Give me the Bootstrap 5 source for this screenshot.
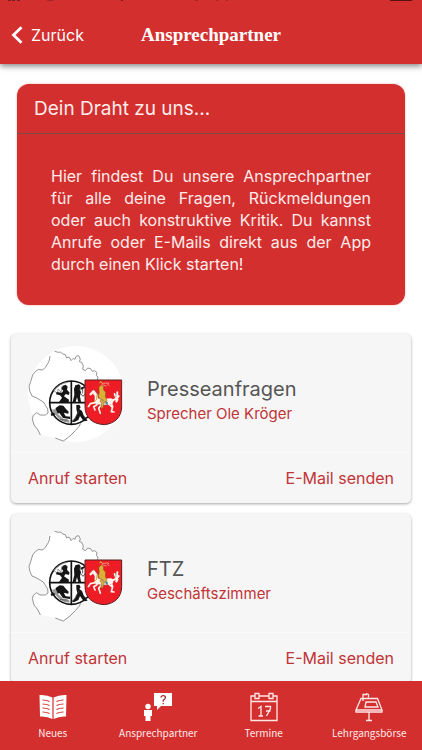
<!DOCTYPE html>
<html lang="de">
<head>
<meta charset="utf-8">
<meta name="viewport" content="width=device-width, initial-scale=1">
<title>Ansprechpartner</title>
<link href="https://cdn.jsdelivr.net/npm/bootstrap@5.3.0/dist/css/bootstrap.min.css" rel="stylesheet">
<style>
:root { --brand: #d32f2f; --link: #c13436; }
body { font-family: Inter, Roboto, sans-serif; font-size: 16px; line-height: 22px; }
a { text-decoration: none; }
.bg-brand { background: var(--brand); }
.app-header { box-shadow: 0 2px 6px rgba(0,0,0,.5); z-index: 2; padding-bottom: 16px; }
.status-strip { height: 2px; display: block; width: 100%; }
.app-bar { display: grid; grid-template-columns: 1fr auto 1fr; padding: 20px 11px 0; }
.app-title { font: bold 19px/26px "Liberation Serif", serif; }
.app-scroll { scrollbar-width: none; padding: 20px 11px 0; }
.app-scroll::-webkit-scrollbar { display: none; }
.intro { background: var(--brand); border: 0; border-radius: 12px; margin: 0 6px 29px; box-shadow: 0 0 2px rgba(211,47,47,.5); color: #ffecea; }
.intro-head { padding: 12px 17px; font-size: 19px; line-height: 25px; border-bottom: 1px solid #7a4a4a; }
.intro-text { padding: 31px 34px 30px; text-align: justify; }
.contact { background: #f6f6f6; border: 0; border-radius: 5px; margin-bottom: 11px; box-shadow: 0 1px 3px rgba(0,0,0,.35); }
.contact-main { padding: 12px 17px 10px; gap: 23px; }
.contact-label { padding-top: 12px; }
.contact-name { font-size: 20px; line-height: 28px; color: #555; }
.contact-role { font-size: 15px; line-height: 22px; color: var(--link); }
.contact-actions { padding: 14px 17px; border-top: 1px solid #fafafa; }
.contact-actions a { color: var(--link); }
.crest { width: 96px; height: 96px; }
.tabs { min-height: 69px; z-index: 2; grid-template-columns: repeat(4, 1fr); }
.tabs a { color: #ffe9e7; font: 10px/18px "Noto Sans CJK SC", sans-serif; padding-top: 11px; gap: 2px; }
.tabs svg { width: 30px; height: 30px; }
</style>
<script src="https://cdn.jsdelivr.net/npm/bootstrap@5.3.0/dist/js/bootstrap.bundle.min.js"></script>
</head>
<body class="d-flex flex-column vh-100 bg-white overflow-hidden">

<svg class="d-none" aria-hidden="true">
  <symbol id="emblem" viewBox="24 18 288 288">
    <path d="M90 45L104 34 115 37 122 36 128 42 136 44 140 54 150 54 153 62 160 55 165 58 168 49 176 47 181 57 178 65 185 67 190 78 188 88 196 92 203 84 212 86 217 94 224 92 231 98 229 107 234 111 231 140 200 240 180 252 166 272 150 288 130 303 116 298 106 294 61 285 54 270 42 255 37 236 40 226 50 218 60 225 76 225 84 219 83 207 77 197 70 186 60 180 48 173 36 168 30 155 27 140 32 125 38 105 46 95 56 88 68 90 76 82 85 68 88 60Z" fill="#fff"/>
    <path d="M104 34L115 37 122 36 128 42 136 44 140 54 144 51 150 54 153 62 160 55 165 58 168 49 176 47 181 57 178 65 185 67 190 78 188 88 196 92 203 84 212 86 217 94 224 92 231 98 229 107 234 111 232 122M182 250L178 258 166 272 150 288 130 303 116 298 106 294M61 285L54 270 42 255 37 236 40 226 50 218 60 225 76 225 84 219 83 207 77 197 70 186 60 180 48 173 36 168 30 155 27 140 32 125 38 105 46 95 56 88 68 90 76 82 85 68 88 60 90 48" fill="none" stroke="#808080" stroke-width="2.500" stroke-linejoin="round"/>
    <circle cx="154" cy="188" r="65" fill="#fff" stroke="#111" stroke-width="5"/>
    <path d="M101 151q18-21 42-24M101 151l12 10 1-14 9 10 2-17 8 6" fill="none" stroke="#888" stroke-width="2.500"/>
    <path d="M154 123V253M89 188H219" stroke="#111" stroke-width="5"/>
    <g fill="#151515">
      <path d="M128 137l9-3 6 6-2 9 8 9-3 7-9-3-5 7 15 10-1 7H117l9-13-6-7-12-3 2-7 15 2 5-6-5-5z"/>
      <path d="M166 136l11-3 5 6-3 9 4 8-3 13 3 17h-8l-4-14-4 14h-9l5-21-1-19zM181 143l14-5v5l-13 7z"/>
      <path d="M107 204l12-8 11 1 8 10 8 8-1 6-14-3 6 11 14 1-1 7-21-3-11-15-14 5-10 4-2-7 14-6z"/>
      <path d="M169 195l9-1 4 8-4 5 8 6 6 16 11 13-12 2-11-16-5 12-13 7-7-3 11-10 6-15-3-12z"/>
    </g>
    <path d="M95 209l10 14 9 11 18 12 16 2v-8l-17-2-17-16-7-15z" fill="#9b9b9b"/>
    <path d="M119 239l24 1M160 244l17-32M190 227l10 9M182 160l7 9 8-10M188 147v13" fill="none" stroke="#444" stroke-width="2.500"/>
    <path d="M195 120H305V199C305 232 284 251 253 254C216 252 195 232 195 199Z" fill="#ee1c25" stroke="#5c2020" stroke-width="3"/>
    <g fill="none" stroke="#fff3ea" stroke-linecap="round" stroke-linejoin="round">
      <path d="M222 157l7 10 0 14" stroke-width="10"/>
      <path d="M212 163l9-10" stroke-width="7"/>
      <path d="M233 184l18 2 20-2" stroke-width="18"/>
      <path d="M226 188l-15 3-6 9M231 194l-10 6 4 10" stroke-width="5"/>
      <path d="M245 193l-9 12 5 15M273 188l5 12-4 15 8 1M266 192l10 9" stroke-width="5"/>
      <path d="M278 181l12-6 2-18M290 177l6-9M287 170l-3-8" stroke-width="6"/>
      <path d="M289 184l3-5" stroke-width="7"/>
    </g>
    <path d="M217 150l7 1 7 9 4 15M232 197l12-2 18 1M287 158l1 13M241 221l6 1M208 202l-4 1" fill="none" stroke="#6c6270" stroke-width="1.500"/>
    <g fill="#ddb136" stroke="#805620" stroke-width="1.500">
      <path d="M237 141l7-6 7 5-1 9 7 8-1 12 5 13-5 7-8-10-10-3-3-9 3-10-1-8z"/>
      <path d="M245 178l8 11-5 15-5 1 2-14-5-9z"/>
    </g>
    <path d="M239 130l3-6 5 7M231 165l-2 15M228 181l-6 4M239 164l12 3" fill="none" stroke="#d6ae38" stroke-width="3"/>
    <path d="M246 130l20-1-3 5 5 3M245 134l15 4" fill="none" stroke="#f0c5a5" stroke-width="2"/>
    <path d="M256 183l7 3 1 9-7-3z" fill="#4f8296"/>
  </symbol>
</svg>

<header class="app-header bg-brand text-white position-relative flex-shrink-0">
  <svg class="status-strip" viewBox="0 0 422 2" preserveAspectRatio="none" aria-hidden="true">
    <path d="M8 0h3v1h-3zM12 0h3v1h-3zM17 0h3v1h-3zM121 0h2v1h-2z" fill="#74201f"/>
    <path d="M47 0h7v1h-7zM195 0h3v1h-3zM216 0h2v1h-2zM226 0h2v1h-2z" fill="#a82626"/>
    <path d="M389 0h24l-2 1h-20z" fill="#5a1010"/>
  </svg>
  <div class="app-bar align-items-center">
    <a href="#" class="d-flex align-items-center gap-2 text-white">
      <svg width="12" height="18" viewBox="0 0 12 18" aria-hidden="true"><path d="M10.500 1.200L2.500 9l8 7.800" fill="none" stroke="#fff" stroke-width="2.800"/></svg>
      <span>Zurück</span>
    </a>
    <h1 class="app-title mb-0">Ansprechpartner</h1>
  </div>
</header>

<main class="app-scroll flex-grow-1 overflow-auto">
  <section class="card intro">
    <h2 class="intro-head fw-normal mb-0">Dein Draht zu uns...</h2>
    <p class="intro-text mb-0">Hier findest Du unsere Ansprechpartner für alle deine Fragen, Rückmeldungen oder auch konstruktive Kritik. Du kannst Anrufe oder E-Mails direkt aus der App durch einen Klick starten!</p>
  </section>

  <article class="card contact">
    <div class="contact-main d-flex align-items-center">
      <svg class="crest bg-white rounded-circle overflow-visible flex-shrink-0" aria-hidden="true"><use href="#emblem"/></svg>
      <div class="contact-label">
        <h3 class="contact-name fw-normal mb-0">Presseanfragen</h3>
        <p class="contact-role mb-0">Sprecher Ole Kröger</p>
      </div>
    </div>
    <div class="contact-actions d-flex justify-content-between">
      <a href="#">Anruf starten</a><a href="#">E-Mail senden</a>
    </div>
  </article>

  <article class="card contact">
    <div class="contact-main d-flex align-items-center">
      <svg class="crest flex-shrink-0" aria-hidden="true"><use href="#emblem"/></svg>
      <div class="contact-label">
        <h3 class="contact-name fw-normal mb-0">FTZ</h3>
        <p class="contact-role mb-0">Geschäftszimmer</p>
      </div>
    </div>
    <div class="contact-actions d-flex justify-content-between">
      <a href="#">Anruf starten</a><a href="#">E-Mail senden</a>
    </div>
  </article>
</main>

<nav class="tabs d-grid bg-brand position-relative flex-shrink-0">
  <a href="#" class="d-flex flex-column align-items-center">
    <svg viewBox="0 0 30 30" aria-hidden="true"><path d="M1.500 3Q9 2.500 14.400 5.500V27Q9 24 2 24.500zM28.500 3Q21 2.500 15.600 5.500V27Q21 24 28 24.500z" fill="#fff"/><path d="M4.500 8q4 0 7 1.500M4.500 12q4 0 7 1.500M4.500 16q4 0 7 1.500M4.500 20q4 0 7 1.500M25.500 8q-4 0-7 1.500M25.500 12q-4 0-7 1.500M25.500 16q-4 0-7 1.500M25.500 20q-4 0-7 1.500" fill="none" stroke="#d32f2f" stroke-width="1.200"/></svg>
    <span>Neues</span>
  </a>
  <a href="#" class="d-flex flex-column align-items-center">
    <svg viewBox="0 0 30 30" aria-hidden="true"><path d="M11 1h18v13H18l-4 4v-4h-3z" fill="#fff"/><path d="M18 5.500q0-1.800 2.200-1.800t2.200 2q0 1.200-2.200 2.600v1.500M20.200 11v1.300" fill="none" stroke="#a52a2a" stroke-width="1.300"/><circle cx="5" cy="14.500" r="2.700" fill="#fff"/><path d="M1 18h8v6H7.500v5h-5v-5H1z" fill="#fff"/></svg>
    <span>Ansprechpartner</span>
  </a>
  <a href="#" class="d-flex flex-column align-items-center">
    <svg viewBox="0 0 30 30" fill="none" stroke="#ffe9e7" stroke-width="1.300" aria-hidden="true"><path d="M6 4H2v24.500h26V4h-4M10 4h10M2 9.500h26M6 1.500h4v5H6zM20 1.500h4v5h-4zM9 16.500l3-2V24M9.500 24H14M16 14.500h5.500v2L17.500 24M17 19h4.500"/></svg>
    <span>Termine</span>
  </a>
  <a href="#" class="d-flex flex-column align-items-center">
    <svg viewBox="0 0 30 30" fill="none" stroke="#ffe9e7" stroke-width="1.300" aria-hidden="true"><path d="M7 6.500h16.500l4.500 11.500H2zM2 18v2h26v-2M15 20v8.500M12 28.500h6M12 10h10l2 5H11zM9 9V2.500h4M12 1.500l2.500 1v3"/></svg>
    <span>Lehrgangsbörse</span>
  </a>
</nav>
</body>
</html>
